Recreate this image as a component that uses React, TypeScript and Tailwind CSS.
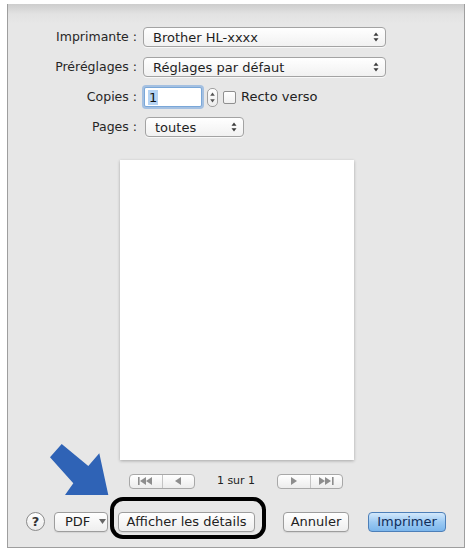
import React from 'react'

const font = { fontFamily: '"DejaVu Sans", "Liberation Sans", sans-serif' }

/* ── small glyphs ─────────────────────────────────────────── */
function UpDown() {
  return (
    <svg width="6" height="10" viewBox="0 0 6 10" className="shrink-0">
      <path d="M3 0.5 L5.5 3.8 H0.5 Z" fill="#3a3a3a" />
      <path d="M3 9.5 L5.5 6.2 H0.5 Z" fill="#3a3a3a" />
    </svg>
  )
}

function Select({ value, width }: { value: string; width: string }) {
  return (
    <div
      className={`${width} h-[20px] flex items-center justify-between pl-[9px] pr-[6px] rounded-[4px] border border-[#a3a3a3] bg-gradient-to-b from-white to-[#f1f1f1] shadow-[0_1px_0_rgba(255,255,255,0.7)] text-[13px] text-[#1e1e1e]`}
    >
      <span className="leading-none">{value}</span>
      <UpDown />
    </div>
  )
}

function Label({ children }: { children: React.ReactNode }) {
  return <div className="w-[135px] text-right text-[12.5px] text-[#262626] pr-[6px]">{children}</div>
}

function NavGroup({ left }: { left: boolean }) {
  const c = '#8d8d8d'
  return (
    <div className="w-[66px] h-[15px] flex rounded-[4px] border border-[#a8a8a8] bg-gradient-to-b from-white to-[#ececec]">
      <div className="flex-1 flex items-center justify-center border-r border-[#c4c4c4]">
        {left ? (
          <svg width="16" height="8" viewBox="0 0 16 8">
            <rect x="0" y="0" width="1.6" height="8" fill={c} />
            <path d="M2 4 L8 0 V8 Z M8 4 L14 0 V8 Z" fill={c} />
          </svg>
        ) : (
          <svg width="8" height="8" viewBox="0 0 8 8">
            <path d="M1 0 L7 4 L1 8 Z" fill={c} />
          </svg>
        )}
      </div>
      <div className="flex-1 flex items-center justify-center">
        {left ? (
          <svg width="8" height="8" viewBox="0 0 8 8">
            <path d="M7 0 L1 4 L7 8 Z" fill={c} />
          </svg>
        ) : (
          <svg width="16" height="8" viewBox="0 0 16 8">
            <path d="M1 0 L7 4 L1 8 Z M7 0 L13 4 L7 8 Z" fill={c} />
            <rect x="14" y="0" width="1.6" height="8" fill={c} />
          </svg>
        )}
      </div>
    </div>
  )
}

function Btn({ children, className = '' }: { children: React.ReactNode; className?: string }) {
  return (
    <div
      className={`h-[20px] flex items-center justify-center rounded-[4px] border border-[#9d9d9d] bg-gradient-to-b from-white to-[#eeeeee] text-[13px] text-[#222] shadow-[0_1px_1px_rgba(0,0,0,0.08)] ${className}`}
    >
      {children}
    </div>
  )
}

export default function App() {
  return (
    <div className="relative w-[468px] h-[554px] bg-white overflow-hidden" style={font}>
      {/* dialog sheet */}
      <div className="ml-[7px] mt-[4px] w-[458px] h-[544px] bg-[#e7e7e7] border-x border-b border-[#9e9e9e] flex flex-col">
        <div className="h-[20px] bg-gradient-to-b from-[#cdcdcd] via-[#e2e2e2] to-[#e7e7e7]" />

        {/* settings */}
        <div className="flex flex-col gap-[10px] mt-[3px]">
          <div className="flex items-center">
            <Label>Imprimante :</Label>
            <Select value="Brother HL-xxxx" width="w-[243px]" />
          </div>
          <div className="flex items-center">
            <Label>Préréglages :</Label>
            <Select value="Réglages par défaut" width="w-[243px]" />
          </div>
          <div className="flex items-center h-[20px]">
            <Label>Copies :</Label>
            <div className="w-[58px] h-[20px] ml-[1px] flex items-center pl-[3px] bg-white border border-[#7aa7d8] rounded-[2px] shadow-[0_0_0_2px_rgba(110,160,220,0.55)]">
              <span className="bg-[#b5d3f3] px-[1px] text-[13px] leading-[15px] text-[#111]">1</span>
            </div>
            <div className="ml-[5px] w-[11px] h-[19px] flex items-center justify-center rounded-[5px] border border-[#a0a0a0] bg-gradient-to-b from-white to-[#ececec]">
              <svg width="5" height="11" viewBox="0 0 5 11">
                <path d="M2.5 0.5 L4.8 3.8 H0.2 Z" fill="#555" />
                <path d="M2.5 10.5 L4.8 7.2 H0.2 Z" fill="#555" />
              </svg>
            </div>
            <div className="ml-[5px] w-[13px] h-[13px] rounded-[2px] border border-[#8f8f8f] bg-gradient-to-b from-white to-[#f0f0f0]" />
            <span className="ml-[5px] text-[13px] text-[#222]">Recto verso</span>
          </div>
          <div className="flex items-center">
            <Label>Pages :</Label>
            <div className="ml-[2px]">
              <Select value="toutes" width="w-[99px]" />
            </div>
          </div>
        </div>

        {/* preview */}
        <div className="ml-[112px] mt-[23px] w-[234px] h-[300px] bg-white shadow-[0_1px_3px_rgba(0,0,0,0.28)]" />

        {/* page navigation */}
        <div className="flex items-center mt-[13px] ml-[121px]">
          <NavGroup left />
          <span className="w-[82px] text-center text-[11px] text-[#222]">1 sur 1</span>
          <NavGroup left={false} />
        </div>

        {/* bottom buttons */}
        <div className="flex items-center mt-[22px]">
          <div className="ml-[18px] w-[19px] h-[19px] rounded-full border border-[#8a8a8a] bg-gradient-to-b from-white to-[#eaeaea] flex items-center justify-center text-[13px] font-bold text-[#333]">
            ?
          </div>
          <Btn className="ml-[9px] w-[54px] justify-start pl-[10px] gap-[9px]">
            <span>PDF</span>
            <svg width="7" height="5" viewBox="0 0 7 5">
              <path d="M0 0 H7 L3.5 5 Z" fill="#666" />
            </svg>
          </Btn>
          <Btn className="ml-[10px] w-[137px]">Afficher les détails</Btn>
          <Btn className="ml-[28px] w-[66px]">Annuler</Btn>
          <div className="ml-[19px] w-[78px] h-[20px] flex items-center justify-center rounded-[4px] border border-[#4d7fb8] bg-gradient-to-b from-[#d3e8fb] via-[#9ccaf3] to-[#7bb6ec] text-[13px] text-[#0f2d5a]">
            Imprimer
          </div>
        </div>
      </div>

      {/* annotation: highlight ring */}
      <div className="absolute left-[110px] top-[497px] w-[156px] h-[42px] rounded-[13px] border-[4px] border-black pointer-events-none" />

      {/* annotation: arrow */}
      <svg className="absolute left-0 top-0 pointer-events-none" width="468" height="554" viewBox="0 0 468 554">
        <polygon
          points="61.7,444 50,457.3 73.3,483.3 65,495 108.3,495 99.3,453.3 88.3,466"
          fill="#2f63b6"
        />
      </svg>
    </div>
  )
}
